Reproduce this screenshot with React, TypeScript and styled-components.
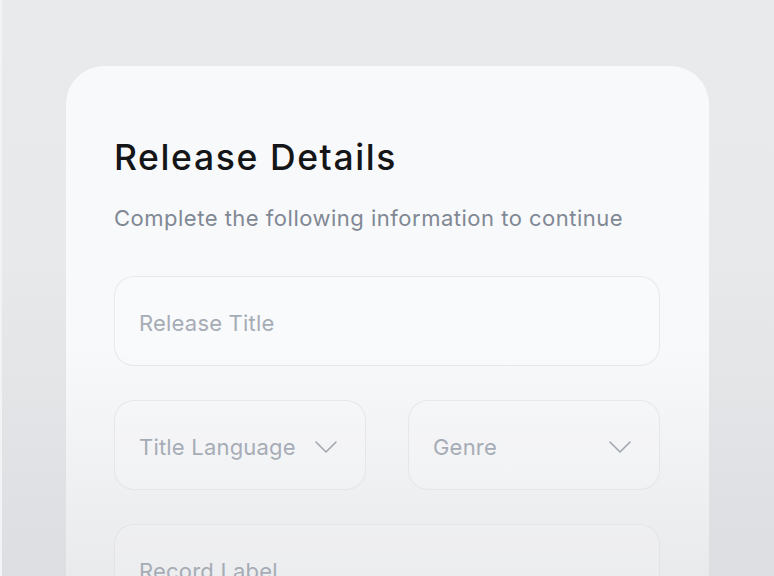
import React from "react";
import styled, { createGlobalStyle } from "styled-components";

const GlobalStyle = createGlobalStyle`
  html, body {
    margin: 0;
    padding: 0;
    overflow: hidden;
  }
  body {
    font-family: Inter, "Liberation Sans", sans-serif;
  }
`;

function Chevron() {
  return (
    <svg width="22" height="12" viewBox="0 0 22 12" fill="none">
      <path
        d="M1 1l10 10 10-10"
        stroke="#a2a8b1"
        strokeWidth="1.6"
        strokeLinecap="round"
        strokeLinejoin="round"
      />
    </svg>
  );
}

export default function App() {
  return (
    <>
      <GlobalStyle />
      <Page>
        <Card>
          <Title>Release Details</Title>
          <Subtitle>Complete the following information to continue</Subtitle>
          <Form>
            <Field>
              <Placeholder>Release Title</Placeholder>
            </Field>
            <Row>
              <Field select>
                <Placeholder>Title Language</Placeholder>
                <Chevron />
              </Field>
              <Field select>
                <Placeholder>Genre</Placeholder>
                <Chevron />
              </Field>
            </Row>
            <Field>
              <Placeholder>Record Label</Placeholder>
            </Field>
          </Form>
        </Card>
      </Page>
    </>
  );
}

const Page = styled.div`
  box-sizing: border-box;
  height: 576px;
  padding: 66px 0 0 66px;
  background: linear-gradient(180deg, #e9eaec 0%, #e8e9eb 45%, #dddee1 100%);
  border-left: 2px solid #f2f3f4;
  overflow: hidden;
`;
const Card = styled.div`
  box-sizing: border-box;
  width: 643px;
  margin-left: -2px;
  height: 700px;
  padding: 52px 49px 0 48px;
  border-radius: 38px;
  background: linear-gradient(
    180deg,
    #f8f9fb 0%,
    #f8f9fb 40%,
    #eeeff1 62%,
    #e9eaec 73%
  );
`;
const Title = styled.h1`
  margin: 0;
  color: #141517;
  font-size: 35.5px;
  font-weight: 500;
  line-height: 80px;
  letter-spacing: 1.6px;
`;
const Subtitle = styled.p`
  margin: 5px 0 0;
  color: #808894;
  font-size: 22px;
  font-weight: 400;
  line-height: 30px;
  letter-spacing: 0.5px;
`;
const Form = styled.div`
  display: flex;
  flex-direction: column;
  gap: 34px;
  margin-top: 43px;
`;
const Row = styled.div`
  display: grid;
  grid-template-columns: 1fr 1fr;
  gap: 42px;
`;
const Field = styled.div<{ select?: boolean }>`
  box-sizing: border-box;
  height: 90px;
  display: flex;
  align-items: center;
  justify-content: space-between;
  padding: 3px 28px 0 24px;
  border: 1.5px solid rgba(214, 218, 224, 0.5);
  border-radius: 20px;
  background: rgba(255, 255, 255, 0.15);
`;
const Placeholder = styled.span`
  color: #a6acb6;
  font-size: 22px;
  font-weight: 400;
  letter-spacing: 0.2px;
`;
